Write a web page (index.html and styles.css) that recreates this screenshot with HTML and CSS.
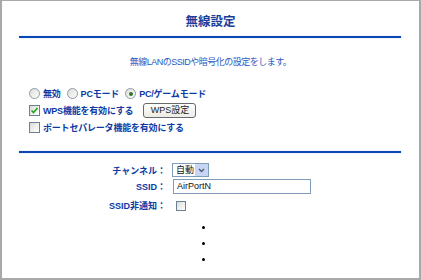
FILE: index.html
```html
<!DOCTYPE html>
<html lang="ja">
<head>
  <meta charset="UTF-8" />
  <title>無線設定</title>
  <link rel="stylesheet" href="styles.css">
</head>
<body>
  <div class="frame">
    <h1 class="title">無線設定</h1>
    <div class="rule rule-top"></div>
    <p class="lead">無線LANのSSIDや暗号化の設定をします。</p>

    <div class="options">
      <div class="opt-row">
        <span class="radio"></span><span class="opt-text">無効</span>
        <span class="radio"></span><span class="opt-text">PCモード</span>
        <span class="radio on"></span><span class="opt-text">PC/ゲームモード</span>
      </div>
      <div class="opt-row">
        <span class="check on"><svg viewBox="0 0 11 11" width="11" height="11"><path d="M2.5 5.5 L4.5 7.5 L8.5 3" fill="none" stroke="#21a121" stroke-width="1.6"/></svg></span>
        <span class="opt-text">WPS機能を有効にする</span>
        <button class="btn">WPS設定</button>
      </div>
      <div class="opt-row">
        <span class="check"></span><span class="opt-text">ポートセパレータ機能を有効にする</span>
      </div>
    </div>

    <div class="rule rule-mid"></div>

    <div class="form">
      <label class="form-label">チャンネル：</label>
      <div class="select">
        <span class="select-val">自動</span>
        <span class="select-arrow"><svg viewBox="0 0 13 12" width="13" height="12"><path d="M4 5 L6.5 7.5 L9 5" fill="none" stroke="#4d6185" stroke-width="1.5"/></svg></span>
      </div>
      <label class="form-label">SSID：</label>
      <div class="input">AirPortN</div>
      <label class="form-label">SSID非通知：</label>
      <div><span class="check small"></span></div>
    </div>

    <div class="dots">
      <span class="dot"></span>
      <span class="dot"></span>
      <span class="dot"></span>
    </div>
  </div>
</body>
</html>
```

FILE: styles.css
```css
body {
  margin: 0;
  background: #fff;
  font-family: "Liberation Sans", "Noto Sans CJK JP", sans-serif;
}
.frame {
  box-sizing: border-box;
  width: 421px;
  height: 280px;
  border: 2px solid #a9a9a9;
  border-top-width: 1px;
  overflow: hidden;
}
.title {
  margin: 14px 0 0;
  font-size: 12.5px;
  line-height: 14px;
  text-align: center;
  color: #1a3f9a;
  font-weight: bold;
}
.rule {
  height: 2px;
  margin: 0 18px 0 17px;
  background: #0b46b5;
  box-shadow: 0 0 1px #6f95d8;
}
.rule-top { margin-top: 7px; }
.rule-mid { margin-top: 15px; }
.lead {
  margin: 17px 0 0;
  font-size: 9px;
  line-height: 14px;
  letter-spacing: -0.5px;
  text-align: center;
  color: #2a58c0;
}
.options {
  margin-top: 16px;
  padding-left: 27px;
}
.opt-row {
  display: flex;
  align-items: center;
  height: 17px;
}
.opt-text {
  font-size: 9px;
  font-weight: bold;
  letter-spacing: -0.2px;
  color: #0d3aa5;
  margin: 0 6px 0 3px;
}
.radio {
  box-sizing: border-box;
  width: 11px;
  height: 11px;
  border: 1px solid #8d98a8;
  border-radius: 50%;
  background: linear-gradient(135deg, #dcdcd6, #fff);
  display: flex;
  align-items: center;
  justify-content: center;
}
.radio.on::after {
  content: "";
  width: 4px;
  height: 4px;
  border-radius: 50%;
  background: #2a7a2a;
}
.check {
  box-sizing: border-box;
  display: inline-block;
  width: 11px;
  height: 11px;
  border: 1px solid #6c7f95;
  background: linear-gradient(135deg, #dcdcd6, #fff);
  position: relative;
}
.check svg {
  position: absolute;
  left: -1px;
  top: -1px;
}
.check.small {
  width: 10px;
  height: 10px;
  margin-left: 4px;
  vertical-align: middle;
}
.btn {
  height: 15px;
  width: 53px;
  margin-left: 4px;
  padding: 0;
  border: 1px solid #6a6a6a;
  border-radius: 3px;
  background: linear-gradient(#fff, #ecebe4);
  font-family: "Liberation Sans", "Noto Sans CJK JP", sans-serif;
  font-size: 9px;
  line-height: 13px;
  color: #222;
}
.form {
  margin-top: 10px;
  display: grid;
  grid-template-columns: 164px auto;
  column-gap: 6px;
  row-gap: 2px;
  align-items: center;
}
.form-label {
  text-align: right;
  font-size: 9px;
  font-weight: bold;
  color: #0d3aa5;
}
.select {
  box-sizing: border-box;
  display: flex;
  width: 37px;
  height: 14px;
  border: 1px solid #7f9db9;
}
.select-val {
  flex: 1;
  font-size: 9px;
  line-height: 12px;
  padding-left: 3px;
  color: #111;
}
.select-arrow {
  width: 13px;
  background: #c8d6f4;
  display: flex;
}
.input {
  box-sizing: border-box;
  width: 138px;
  height: 15px;
  margin-left: 1px;
  border: 1px solid #7f9db9;
  padding-left: 3px;
  font-size: 9px;
  line-height: 13px;
  color: #111;
}
.dots {
  margin-top: 12px;
  padding-left: 200px;
  display: flex;
  flex-direction: column;
  gap: 13px;
}
.dot {
  width: 3px;
  height: 3px;
  border-radius: 50%;
  background: #000;
}
```
